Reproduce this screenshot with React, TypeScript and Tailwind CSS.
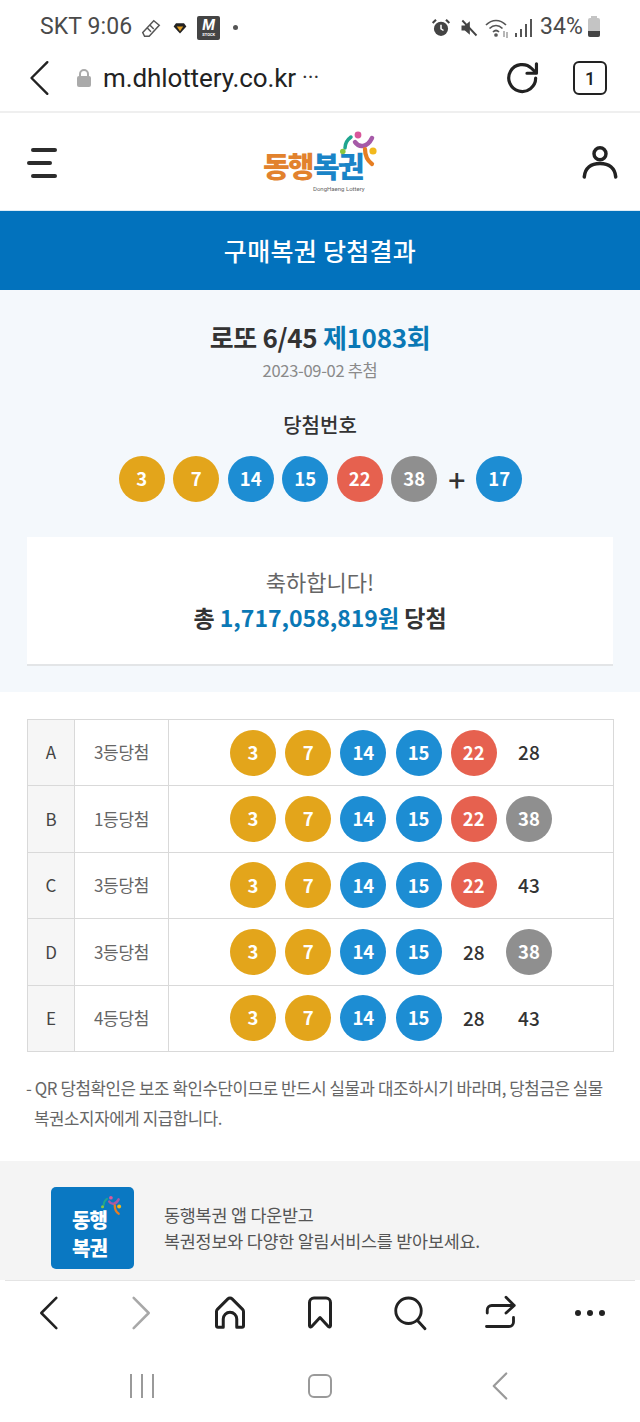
import { ReactNode } from 'react';

const FONT = "font-['Noto_Sans_CJK_KR','Noto_Sans',sans-serif]";

function ballColor(n: number) {
  if (n <= 10) return 'bg-[#e3a51b]';
  if (n <= 20) return 'bg-[#1d8dd3]';
  if (n <= 30) return 'bg-[#e6614f]';
  return 'bg-[#8f8f8f]';
}

function Ball({ n }: { n: number }) {
  return (
    <span className={`w-[46px] h-[46px] shrink-0 rounded-full flex items-center justify-center text-white text-[18.500px] font-bold ${ballColor(n)}`}>
      {n}
    </span>
  );
}

// numbers that were not matched are plain text, no ball
function PlainNum({ n }: { n: number }) {
  return <span className="w-[46px] h-[46px] shrink-0 flex items-center justify-center text-[#333] text-[19px] font-medium">{n}</span>;
}

const rows = [
  { id: 'A', rank: '3등당첨', nums: [3, 7, 14, 15, 22], rest: [[28, false]] },
  { id: 'B', rank: '1등당첨', nums: [3, 7, 14, 15, 22], rest: [[38, true]] },
  { id: 'C', rank: '3등당첨', nums: [3, 7, 14, 15, 22], rest: [[43, false]] },
  { id: 'D', rank: '3등당첨', nums: [3, 7, 14, 15], rest: [[28, false], [38, true]] },
  { id: 'E', rank: '4등당첨', nums: [3, 7, 14, 15], rest: [[28, false], [43, false]] },
] as { id: string; rank: string; nums: number[]; rest: [number, boolean][] }[];

function Stroke({ children, className, w = 2.4, box = '0 0 24 24' }: { children: ReactNode; className: string; w?: number; box?: string }) {
  return (
    <svg viewBox={box} fill="none" stroke="currentColor" strokeWidth={w} strokeLinecap="round" strokeLinejoin="round" className={className}>
      {children}
    </svg>
  );
}

function LogoMark({ className }: { className: string }) {
  return (
    <svg viewBox="0 0 40 40" className={className}>
      <circle cx="18" cy="5" r="3.4" fill="#d9579b" />
      <path d="M15 12c4 6 12 6 17-4" fill="none" stroke="#a65aa8" strokeWidth="4.500" strokeLinecap="round" />
      <path d="M11 7c-4 3-6 7-6 11" fill="none" stroke="#1fa58f" strokeWidth="3.500" strokeLinecap="round" />
      <circle cx="2.800" cy="21.500" r="2.800" fill="#8cc63f" />
      <circle cx="33" cy="21" r="3.600" fill="#f2b91d" />
      <path d="M25 19c0 7 3 12 7 15" fill="none" stroke="#e67e22" strokeWidth="4.200" strokeLinecap="round" />
    </svg>
  );
}

export default function App() {
  return (
    <div className={`w-[640px] h-[1422px] overflow-hidden bg-white flex flex-col ${FONT}`}>
      {/* status bar */}
      <div className="h-[48px] shrink-0 flex items-center justify-between pl-[40px] pr-[40px] pt-[7px] font-['Roboto',sans-serif] text-[#4a4a4a]">
        <div className="flex items-center">
          <span className="text-[23px] tracking-[0.1px]">SKT 9:06</span>
          <svg viewBox="0 0 24 24" fill="none" stroke="#555" strokeWidth="1.6" className="w-[22px] h-[22px] ml-[8px]">
            <path d="M3 17 15 4l6 5-11 12H5z" />
            <path d="M8 12l4 4M11 9l4 4" />
          </svg>
          <svg viewBox="0 0 20 20" className="w-[16px] h-[16px] ml-[10px]">
            <path d="M10 17 2 8l3-4h10l3 4z" fill="#222" />
            <path d="M10 14 6 8h8z" fill="#e6a020" />
          </svg>
          <div className="w-[23px] h-[24px] ml-[9px] bg-[#444] rounded-[2px] flex flex-col items-center justify-center text-white leading-none">
            <span className="text-[15px] font-bold italic">M</span>
            <span className="text-[4px] font-bold">STOCK</span>
          </div>
          <span className="w-[5px] h-[5px] rounded-full bg-[#555] ml-[13px]" />
        </div>
        <div className="flex items-center">
          <svg viewBox="0 0 24 24" className="w-[20px] h-[20px]">
            <circle cx="12" cy="13" r="8.500" fill="#444" />
            <path d="M12 8v5l3 2" stroke="#fff" strokeWidth="1.800" fill="none" />
            <path d="M2 6l4-4M22 6l-4-4" stroke="#444" strokeWidth="2.500" />
          </svg>
          <svg viewBox="0 0 24 24" className="w-[20px] h-[20px] ml-[8px]">
            <path d="M3 9h4l6-5v16l-6-5H3z" fill="#444" />
            <path d="M4 3l17 18" stroke="#444" strokeWidth="2.200" />
          </svg>
          <svg viewBox="0 0 24 24" fill="none" stroke="#555" strokeWidth="1.700" className="w-[24px] h-[24px] ml-[6px]">
            <path d="M1 9c6-6 14-6 20 0M4.500 12.500c4-4 9-4 13 0M8 16c2-2 4-2 6 0" />
            <circle cx="11" cy="19" r="1" fill="#555" />
            <path d="M19 15v6M22 16v6" stroke="#888" strokeWidth="1.200" />
          </svg>
          <div className="flex items-end gap-[3px] h-[18px] ml-[6px]">
            <span className="w-[2px] h-[4px] bg-[#555]" />
            <span className="w-[2px] h-[8px] bg-[#555]" />
            <span className="w-[2px] h-[13px] bg-[#555]" />
            <span className="w-[2px] h-[18px] bg-[#555]" />
          </div>
          <span className="text-[23px] ml-[8px] tracking-[0.1px]">34%</span>
          <div className="relative w-[12px] h-[19px] ml-[5px] bg-[#c4c4c4] rounded-[2px] flex items-end">
            <span className="absolute -top-[2px] left-[3px] w-[6px] h-[2px] bg-[#c4c4c4]" />
            <span className="w-full h-[6px] bg-[#444] rounded-b-[2px]" />
          </div>
        </div>
      </div>

      {/* address bar */}
      <div className="h-[65px] shrink-0 flex items-center border-b-2 border-[#efefef] pb-[3px] relative">
        <Stroke w={1.500} className="w-[34px] h-[38px] ml-[24px] text-[#222]" box="0 0 20 24">
          <path d="M14 2 4 12l10 10" />
        </Stroke>
        <svg viewBox="0 0 16 20" className="w-[16px] h-[20px] ml-[18px]">
          <path d="M4 9V6a4 4 0 0 1 8 0v3" fill="none" stroke="#aaa" strokeWidth="2" />
          <rect x="1" y="8" width="14" height="11" rx="2" fill="#aaa" />
        </svg>
        <span className="ml-[11px] text-[26px] text-[#222] font-['Roboto',sans-serif] tracking-[-0.1px]">m.dhlottery.co.kr</span>
        <span className="ml-[6px] text-[22px] leading-none text-[#333] font-['Roboto',sans-serif]">···</span>
        <Stroke w={2} className="w-[38px] h-[38px] ml-auto text-[#222]">
          <path d="M20 12a8.500 8.500 0 1 1-2.500-6L20 8.500" />
          <path d="M20.500 3v6h-6" />
        </Stroke>
        <div className="w-[34px] h-[34px] ml-[31px] mr-[33px] rounded-[6px] border-[2.5px] border-[#222] flex items-center justify-center font-['Roboto',sans-serif] font-medium text-[18px] text-[#222]">1</div>
      </div>

      {/* site header */}
      <div className="h-[98px] shrink-0 flex items-center pl-[27px] pr-[22px] border-b border-[#dcecf6]">
        <div className="flex flex-col gap-[9px] w-[30px] mt-[2px]">
          <span className="w-[26px] h-[4px] rounded bg-[#2c2c2c] self-end" />
          <span className="w-[25px] h-[4px] rounded bg-[#2c2c2c]" />
          <span className="w-[26px] h-[4px] rounded bg-[#2c2c2c] self-end" />
        </div>
        <div className="relative w-[118px] h-[66px] ml-[206px] self-start mt-[17px] font-['Roboto','Noto_Sans_CJK_KR',sans-serif]">
          <span className="absolute left-0 top-[23px] text-[#e2822d] text-[29px] font-black tracking-[-2px] leading-[30px]">동행</span>
          <span className="absolute left-[50px] top-[23px] text-[#1a84c7] text-[29px] font-black tracking-[-2px] leading-[30px]">복권</span>
          <span className="absolute left-[50px] top-[55px] text-[#666] text-[6px] leading-[8px]">DongHaeng Lottery</span>
          <LogoMark className="absolute left-[77px] top-0 w-[40px] h-[40px]" />
        </div>
        <Stroke w={2.300} className="w-[36px] h-[36px] ml-auto text-[#222]" box="0 0 24 24">
          <circle cx="12" cy="6.500" r="4" />
          <path d="M1.500 22c.5-6 4.500-9 10.500-9s10 3 10.500 9" />
        </Stroke>
      </div>

      {/* title bar */}
      <div className="h-[79px] shrink-0 bg-[#0272bd] flex items-center justify-center text-white text-[25px] font-medium tracking-[0.3px]">
        구매복권 당첨결과
      </div>

      {/* draw summary */}
      <div className="h-[402px] shrink-0 bg-[#f4f8fc] flex flex-col items-center pt-[28px] px-[27px]">
        <div className="text-[26px] leading-[38px] font-bold text-[#333] tracking-[-0.3px]">
          로또 6/45 <span className="text-[#0a78b5]">제1083회</span>
        </div>
        <div className="mt-[2px] text-[16.500px] leading-[24px] text-[#8a8a8a] tracking-[-0.3px]">2023-09-02 추첨</div>
        <div className="mt-[28px] text-[20px] leading-[30px] font-medium text-[#333]">당첨번호</div>
        <div className="mt-[16px] flex items-center gap-[8.5px] pl-[1px]">
          {[3, 7, 14, 15, 22, 38].map(n => <Ball key={n} n={n} />)}
          <span className="w-[22px] text-center text-[30px] leading-none text-[#333] font-medium">+</span>
          <Ball n={17} />
        </div>
        <div className="mt-[35px] w-full h-[129px] bg-white border-b-2 border-[#e3e5e7] flex flex-col items-center justify-center pb-[3px]">
          <div className="text-[22px] leading-[36px] text-[#666]">축하합니다!</div>
          <div className="text-[23px] leading-[36px] font-bold text-[#333]">
            총 <span className="text-[#0a78b5]">1,717,058,819원</span> 당첨
          </div>
        </div>
      </div>

      {/* result table */}
      <div className="shrink-0 mt-[27px] ml-[27px] mr-[26px] border-t border-l border-[#d9d9d9]">
        {rows.map(r => (
          <div key={r.id} className="h-[66.4px] flex border-b border-[#d9d9d9]">
            <div className="w-[47px] bg-[#f6f6f6] border-r border-[#d9d9d9] flex items-center justify-center text-[17px] text-[#444] pb-[1px]">{r.id}</div>
            <div className="w-[94px] border-r border-[#d9d9d9] flex items-center justify-center text-[17px] text-[#666] tracking-[-0.3px] pb-[1px]">{r.rank}</div>
            <div className="flex-1 border-r border-[#d9d9d9] flex items-center gap-[9.200px] pl-[61px]">
              {r.nums.map(n => <Ball key={n} n={n} />)}
              {r.rest.map(([n, hit]) => (hit ? <Ball key={n} n={n} /> : <PlainNum key={n} n={n} />))}
            </div>
          </div>
        ))}
      </div>

      {/* notice */}
      <div className="shrink-0 mt-[21px] ml-[26px] mr-[20px] pl-[8px] -indent-[8px] text-[16.800px] leading-[30px] text-[#666] tracking-[-0.4px]">
        - QR 당첨확인은 보조 확인수단이므로 반드시 실물과 대조하시기 바라며, 당첨금은 실물 복권소지자에게 지급합니다.
      </div>

      {/* app banner */}
      <div className="h-[119px] shrink-0 mt-[28px] bg-[#f4f4f4] flex items-start pt-[26px] pl-[51px]">
        <div className="relative w-[83px] h-[82px] rounded-[5px] bg-[#0a78c2] flex flex-col items-center text-white text-[20px] font-black leading-[28px] tracking-[-1px] pt-[19px]">
          <span className="-ml-[6px]">동행</span>
          <span className="-ml-[6px]">복권</span>
          <LogoMark className="absolute left-[50px] top-[8px] w-[22px] h-[22px]" />
        </div>
        <div className="ml-[30px] mt-[15px] text-[17.400px] leading-[26px] text-[#555] tracking-[-0.2px]">
          <div>동행복권 앱 다운받고</div>
          <div>복권정보와 다양한 알림서비스를 받아보세요.</div>
        </div>
      </div>

      {/* browser toolbar */}
      <div className="h-[66px] shrink-0 border-t border-[#e4e4e4] grid grid-cols-7 w-[630px] ml-[5px] items-center justify-items-center">
        <Stroke w={1.600} className="w-[32px] h-[38px] text-[#222]" box="0 0 20 24">
          <path d="M14 2.500 4.500 12l9.500 9.500" />
        </Stroke>
        <Stroke w={1.600} className="w-[32px] h-[38px] text-[#a8a8a8]" box="0 0 20 24">
          <path d="M6 2.500 15.500 12 6 21.500" />
        </Stroke>
        <Stroke w={2} className="w-[36px] h-[36px] text-[#222]">
          <path d="M3 20.500V11a2 2 0 0 1 .6-1.400l7-7a2 2 0 0 1 2.800 0l7 7a2 2 0 0 1 .6 1.400v9.500a1 1 0 0 1-1 1h-3.500V16a4.500 4.500 0 0 0-9 0v5.500H4a1 1 0 0 1-1-1z" />
        </Stroke>
        <Stroke w={2} className="w-[36px] h-[36px] text-[#222]">
          <path d="M5 20.500V5a3 3 0 0 1 3-3h8a3 3 0 0 1 3 3v15.500a.8.8 0 0 1-1.300.6L12 15l-5.700 6.100a.8.8 0 0 1-1.300-.6z" />
        </Stroke>
        <Stroke w={1.900} className="w-[36px] h-[36px] text-[#222]">
          <circle cx="11" cy="10.500" r="8.500" />
          <path d="m17 17 5 5.500" />
        </Stroke>
        <Stroke w={1.900} className="w-[36px] h-[36px] text-[#222]">
          <path d="M3.500 12V10a3 3 0 0 1 3-3h15M16 1.500 21.500 7 16 12" />
          <path d="M3 21h15a3 3 0 0 0 3-3v-3" />
        </Stroke>
        <div className="flex gap-[6px]">
          <span className="w-[6px] h-[6px] rounded-full bg-[#222]" />
          <span className="w-[6px] h-[6px] rounded-full bg-[#222]" />
          <span className="w-[6px] h-[6px] rounded-full bg-[#222]" />
        </div>
      </div>

      {/* android nav */}
      <div className="flex-1 flex items-center pt-[4px]">
        <div className="flex gap-[9px] ml-[130px] shrink-0">
          <span className="w-[2px] h-[24px] bg-[#9a9a9a]" />
          <span className="w-[2px] h-[24px] bg-[#9a9a9a]" />
          <span className="w-[2px] h-[24px] bg-[#9a9a9a]" />
        </div>
        <span className="w-[24px] h-[24px] ml-[154px] shrink-0 rounded-[6px] border-2 border-[#9a9a9a]" />
        <Stroke w={1.800} className="w-[22px] h-[30px] ml-[157px] text-[#9a9a9a]" box="0 0 16 24">
          <path d="M13 2 3 12l10 10" />
        </Stroke>
      </div>
    </div>
  );
}
